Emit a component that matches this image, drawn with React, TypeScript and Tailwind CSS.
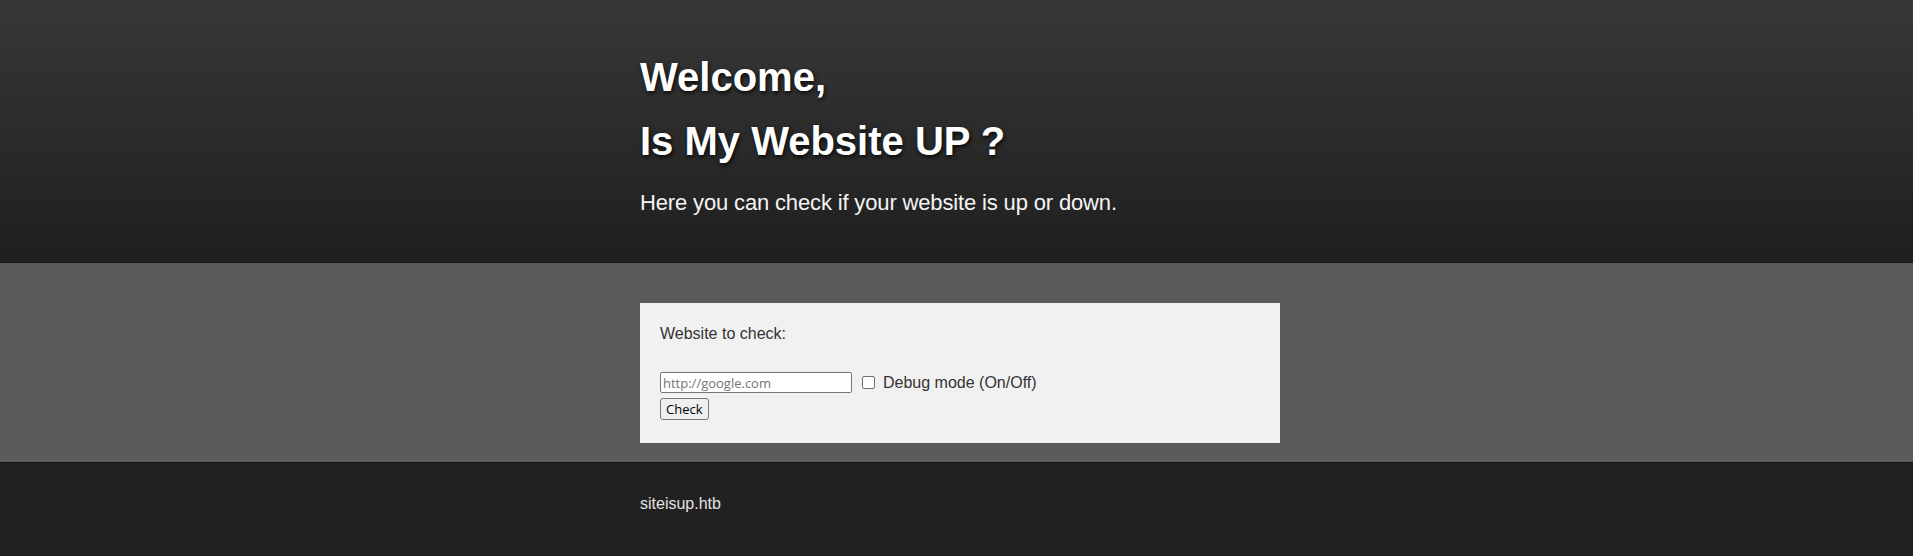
export default function App() {
  return (
    <div className="min-h-screen bg-[#212121] font-['Liberation_Sans',Arial,sans-serif]">
      {/* top banner */}
      <header className="h-[263px] border-b border-[#161616] bg-gradient-to-b from-[#383838] to-[#1f1f1f]">
        <div className="ml-[640px] w-[640px] pt-[45px]">
          <h1 className="text-[40px] font-bold leading-[64px] text-white [text-shadow:1px_2px_4px_rgba(0,0,0,0.85)]">
            Welcome,
            <br />
            Is My Website UP ?
          </h1>
          <p className="mt-[17px] text-[22px] leading-[25px] tracking-[-0.15px] text-[#f4f4f4]">
            Here you can check if your website is up or down.
          </p>
        </div>
      </header>

      {/* form area */}
      <main className="h-[199px] bg-[#5c5a5b] pt-[40px]">
        <div className="ml-[640px] w-[640px] bg-[#f1f1f1] px-[20px] pb-[22px] pt-[22px] text-[16px] text-[#333]">
          <div className="leading-[18px]">Website to check:</div>
          <div className="mt-[29px] flex items-center">
            <input
              type="text"
              placeholder="http://google.com"
              className="h-[21px] w-[192px] rounded-[2px] border border-[#767676] bg-white px-[2px] font-['Open_Sans',sans-serif] text-[13px] text-black placeholder:text-[#757575] outline-none"
            />
            <input
              type="checkbox"
              className="ml-[10px] h-[13px] w-[13px] appearance-none rounded-[2px] border border-[#6f6f6f] bg-white"
            />
            <span className="ml-[8px] leading-[18px]">Debug mode (On/Off)</span>
          </div>
          <button className="mt-[5px] h-[22px] rounded-[3px] border border-[#767676] bg-[#efefef] px-[5px] font-['Open_Sans',sans-serif] text-[13px] leading-none text-black">
            Check
          </button>
        </div>
      </main>

      {/* footer */}
      <footer className="h-[94px] border-t border-[#131313] bg-[#212121] pt-[32px]">
        <div className="ml-[640px] w-[640px] text-[16px] leading-[18px] text-[#e2e2e2]">siteisup.htb</div>
      </footer>
    </div>
  );
}
